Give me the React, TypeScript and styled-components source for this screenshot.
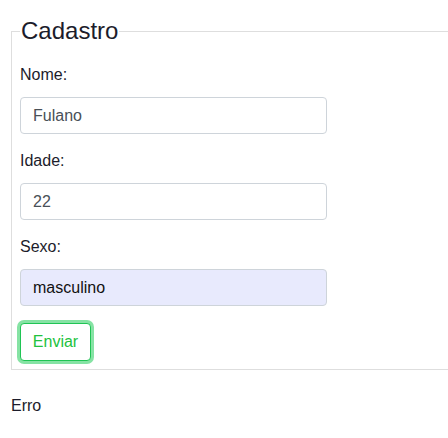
import styled, { createGlobalStyle } from 'styled-components'

const GlobalStyle = createGlobalStyle`
  body {
    margin: 0;
    background: #fff;
    font-family: "Liberation Sans", Arial, sans-serif;
    color: #212529;
  }
`

const Page = styled.div`
  width: 448px;
  height: 438px;
  overflow: hidden;
  padding-left: 11px;
  box-sizing: border-box;
`

const Fieldset = styled.fieldset`
  width: 470px;
  margin: 17px 0 0 0;
  padding: 0 8px 8px 8px;
  border: 1px solid #dedede;
  box-sizing: border-box;
`

const Legend = styled.legend`
  font-size: 24px;
  line-height: 28px;
  padding: 0 1px;
  color: #1c1c2b;
`

const Field = styled.div<{ $first?: boolean }>`
  display: flex;
  flex-direction: column;
  margin-top: ${(p) => (p.$first ? '18px' : '15px')};
`

const Label = styled.label`
  font-size: 16px;
  line-height: 24px;
  margin-bottom: 10px;
  color: #1c1c2b;
`

const Input = styled.input<{ $filled?: boolean }>`
  width: 307px;
  height: 37px;
  box-sizing: border-box;
  padding: 0 12px;
  border: 1px solid #ced4da;
  border-radius: 4px;
  font-family: inherit;
  font-size: 16px;
  color: ${(p) => (p.$filled ? '#111' : '#495057')};
  background: ${(p) => (p.$filled ? '#e8eafd' : '#fff')};
  outline: none;
`

const SubmitButton = styled.button`
  margin-top: 17px;
  width: 71px;
  height: 38px;
  box-sizing: border-box;
  border: 1px solid #1fc454;
  border-radius: 4px;
  background: #fff;
  color: #22c23e;
  font-family: inherit;
  font-size: 16px;
  box-shadow: 0 0 0 3px #86e3a4;
  cursor: pointer;
`

const Message = styled.p`
  margin: 24px 0 0 0;
  font-size: 16px;
  line-height: 24px;
  color: #1c1c2b;
`

const App = () => {
  return (
    <Page>
      <GlobalStyle />
      <Fieldset>
        <Legend>Cadastro</Legend>
        <Field $first>
          <Label htmlFor="nome">Nome:</Label>
          <Input id="nome" defaultValue="Fulano" />
        </Field>
        <Field>
          <Label htmlFor="idade">Idade:</Label>
          <Input id="idade" defaultValue="22" />
        </Field>
        <Field>
          <Label htmlFor="sexo">Sexo:</Label>
          <Input id="sexo" defaultValue="masculino" $filled />
        </Field>
        <SubmitButton type="button">Enviar</SubmitButton>
      </Fieldset>
      <Message>Erro</Message>
    </Page>
  )
}

export default App
